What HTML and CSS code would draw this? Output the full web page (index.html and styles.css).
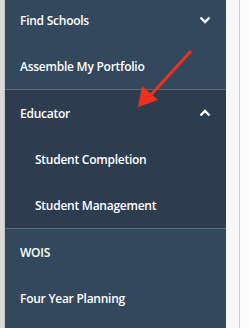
FILE: index.html
```html
<!DOCTYPE html>
<html lang="en">
<head>
  <meta charset="UTF-8" />
  <meta name="viewport" content="width=device-width, initial-scale=1.0" />
  <title>Menu</title>
  <link rel="stylesheet" href="styles.css">
</head>
<body>

  <div class="edge"></div>

  <nav class="sidebar">
    <div class="group">
      <a class="item" href="#">Find Schools
        <svg class="chev" viewBox="0 0 12 8"><path d="M1.5 1.5 L6 6 L10.5 1.5" /></svg>
      </a>
      <a class="item" href="#">Assemble My Portfolio</a>
    </div>

    <div class="group open">
      <a class="item" href="#">Educator
        <svg class="chev" viewBox="0 0 12 8"><path d="M1.5 6.5 L6 2 L10.5 6.5" /></svg>
      </a>
      <a class="item sub" href="#">Student Completion</a>
      <a class="item sub" href="#">Student Management</a>
    </div>

    <div class="group last">
      <a class="item" href="#">WOIS</a>
      <a class="item" href="#">Four Year Planning</a>
    </div>

    <!-- annotation arrow -->
    <svg class="pointer" viewBox="0 0 249 328">
      <line x1="191" y1="51" x2="149" y2="97" />
      <polygon points="138,107 142,86 158,100" />
    </svg>
  </nav>

  <div class="gutter"></div>
  <div class="rule"></div>
  <div class="rest"></div>

</body>
</html>
```

FILE: styles.css
```css
body {
  margin: 0;
  display: flex;
  height: 328px;
  overflow: hidden;
  font-family: "Open Sans", "Liberation Sans", sans-serif;
  background: #fbfbfb;
}

.edge {
  width: 4px;
  background: #dadada;
  border-right: 1px solid #c4c4c4;
}

.sidebar {
  width: 221px;
  background: #34485d;
  display: flex;
  flex-direction: column;
  margin-top: -3px;
}

.group {
  border-bottom: 1px solid #5b6b7b;
}

.group.open {
  background: #2d3d4f;
}

.group.last {
  border-bottom: none;
}

.item {
  height: 46px;
  display: flex;
  align-items: center;
  justify-content: space-between;
  padding: 0 15px;
  color: #fff;
  font-size: 12px;
  font-weight: 600;
  letter-spacing: -0.25px;
  text-decoration: none;
}

.item.sub {
  padding-left: 30px;
}

.chev {
  width: 12px;
  height: 8px;
}

.chev path {
  fill: none;
  stroke: #fff;
  stroke-width: 2.4;
}

.pointer {
  position: absolute;
  left: 0;
  top: 0;
  width: 249px;
  height: 328px;
}

.pointer line {
  stroke: #f0301d;
  stroke-width: 3;
}

.pointer polygon {
  fill: #f0301d;
}

.gutter {
  width: 13px;
  background: #f7f7f7;
}

.rule {
  width: 1px;
  background: #cdcdcd;
}

.rest {
  flex: 1;
  background: #fcfcfc;
}
```
